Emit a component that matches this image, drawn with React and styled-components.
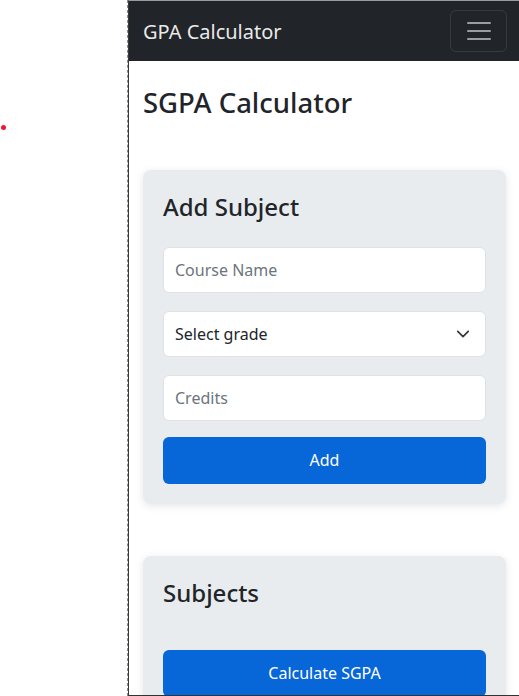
import React from "react";
import styled, { createGlobalStyle } from "styled-components";

const GlobalStyle = createGlobalStyle`
  * { box-sizing: border-box; }
  body {
    margin: 0;
    background: #fff;
    font-family: "Noto Sans", "Open Sans", Arial, sans-serif;
    color: #212529;
  }
`;

function App() {
  return (
    <Page>
      <GlobalStyle />
      <Stage>
        <Dot />
      </Stage>
      <Device>
        <Navbar>
          <Brand>GPA Calculator</Brand>
          <Toggler aria-label="Toggle navigation">
            <svg width="30" height="30" viewBox="0 0 30 30">
              <path
                d="M4 7h22M4 15h22M4 23h22"
                stroke="rgba(255,255,255,0.55)"
                strokeWidth="2"
                strokeLinecap="round"
              />
            </svg>
          </Toggler>
        </Navbar>
        <Main>
          <Title>SGPA Calculator</Title>
          <Card>
            <CardTitle>Add Subject</CardTitle>
            <Form>
              <Input placeholder="Course Name" />
              <SelectBox>
                <span>Select grade</span>
                <svg width="14" height="14" viewBox="0 0 16 16">
                  <path
                    d="M2 5l6 6 6-6"
                    fill="none"
                    stroke="#343a40"
                    strokeWidth="2"
                    strokeLinecap="round"
                    strokeLinejoin="round"
                  />
                </svg>
              </SelectBox>
              <Input placeholder="Credits" />
              <Button $top={-2}>Add</Button>
            </Form>
          </Card>
          <Card $gap={52}>
            <CardTitle>Subjects</CardTitle>
            <Button $top={42}>Calculate SGPA</Button>
          </Card>
        </Main>
      </Device>
    </Page>
  );
}

const Page = styled.div`
  display: flex;
  height: 696px;
  overflow: hidden;
`;

const Stage = styled.div`
  position: relative;
  width: 128px;
  flex-shrink: 0;
  border-right: 1px dashed #8a8a8a;
`;

const Dot = styled.div`
  position: absolute;
  left: 1px;
  top: 125px;
  width: 5px;
  height: 5px;
  border-radius: 50%;
  background: #e81c2e;
`;

const Device = styled.div`
  width: 391px;
  height: 696px;
  flex-shrink: 0;
  border-left: 1px solid #3a3a3a;
  border-top: 1px solid #9a9a9a;
  border-bottom: 1px solid #333;
  overflow: hidden;
`;

const Navbar = styled.nav`
  display: flex;
  align-items: center;
  justify-content: space-between;
  height: 60px;
  padding: 0 12px 0 14px;
  background: #212529;
`;

const Brand = styled.div`
  padding-top: 2px;
  font-size: 20px;
  color: rgba(255, 255, 255, 0.92);
  line-height: 1;
`;

const Toggler = styled.button`
  display: flex;
  align-items: center;
  justify-content: center;
  width: 57px;
  height: 42px;
  padding: 0;
  background: transparent;
  border: 1px solid rgba(255, 255, 255, 0.1);
  border-radius: 6px;
`;

const Main = styled.main`
  padding: 0 13px 0 14px;
`;

const Title = styled.h1`
  margin: 25px 0 0;
  font-size: 27.5px;
  font-weight: 500;
  line-height: 1.2;
`;

const Card = styled.section`
  margin-top: ${(p) => p.$gap ?? 51}px;
  padding: 20px;
  background: #e9ecef;
  border-radius: 8px;
  box-shadow: 0 2px 8px rgba(0, 0, 0, 0.1);
`;

const CardTitle = styled.h3`
  margin: 3px 0 0;
  font-size: 24px;
  font-weight: 500;
  line-height: 1.2;
`;

const Form = styled.div`
  display: flex;
  flex-direction: column;
  gap: 18px;
  margin-top: 25px;
`;

const Input = styled.input`
  height: 46px;
  padding: 0 11px;
  border: 1px solid #dee2e6;
  border-radius: 6px;
  background: #fff;
  font-family: inherit;
  font-size: 16px;
  color: #212529;
  &::placeholder {
    color: #6c757d;
  }
`;

const SelectBox = styled.div`
  display: flex;
  align-items: center;
  justify-content: space-between;
  height: 46px;
  padding: 0 15px 0 11px;
  border: 1px solid #dee2e6;
  border-radius: 6px;
  background: #fff;
  font-size: 16px;
`;

const Button = styled.button`
  height: 47px;
  width: 100%;
  margin-top: ${(p) => p.$top ?? 0}px;
  border: none;
  border-radius: 6px;
  background: #0766d8;
  color: #fff;
  font-family: inherit;
  font-size: 16px;
`;

export default App;
